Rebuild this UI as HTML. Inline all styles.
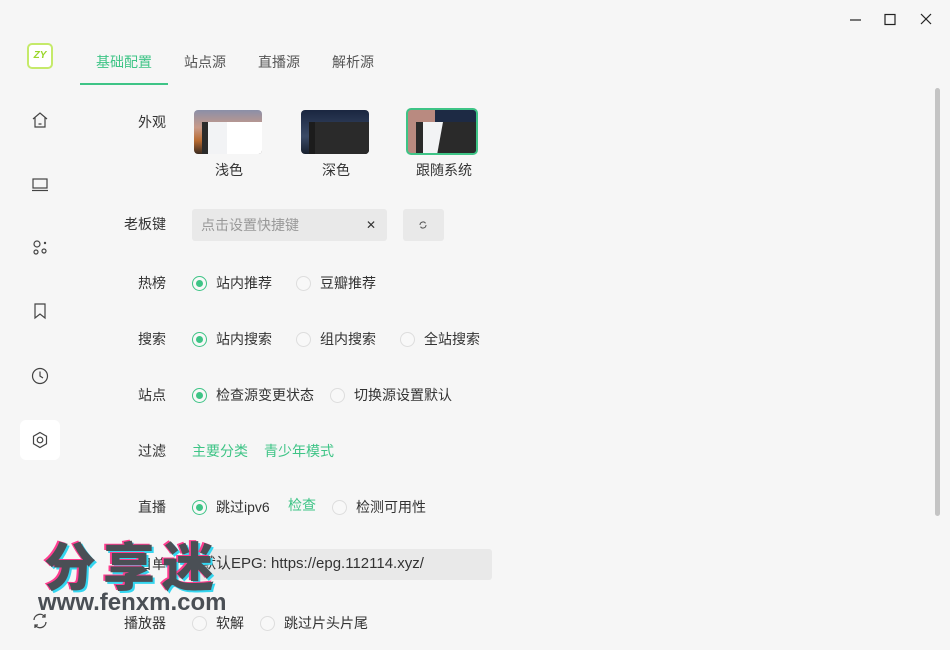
<!DOCTYPE html>
<html><head><meta charset="utf-8"><style>
*{margin:0;padding:0;box-sizing:border-box}
body{width:950px;height:650px;background:#f6f6f6;font-family:"Liberation Sans","Noto Sans CJK SC",sans-serif;font-size:14px;line-height:16px;color:#333;position:relative;overflow:hidden}
.a{position:absolute;white-space:nowrap}
.lbl{position:absolute;right:784px;line-height:16px}
.r{position:absolute;width:15px;height:15px;border-radius:50%;border:1px solid #ddd;background:#f8f8f8}
.r.on{border-color:#3ec486}
.r.on::after{content:"";position:absolute;left:3px;top:3px;width:7px;height:7px;border-radius:50%;background:#3ec486}
.g{color:#3ec486}
.ic{position:absolute;left:30px;width:20px;height:20px}
</style></head><body>
<svg class="a" style="left:845px;top:10px" width="95" height="20"><g stroke="#222" stroke-width="1.2" fill="none"><line x1="5" y1="10" x2="16" y2="10"/><rect x="40" y="4.5" width="10" height="10"/><line x1="76" y1="4" x2="86" y2="14"/><line x1="86" y1="4" x2="76" y2="14"/></g></svg>
<div class="a" style="left:27px;top:43px;width:26px;height:26px;border-radius:5px;border:2px solid #c5ea6a;background:#fff;font:bold italic 10px 'Liberation Sans';color:#9ad62a;text-align:center;line-height:22px">ZY</div>
<div class="a g" style="left:96px;top:54px">基础配置</div>
<div class="a" style="left:184px;top:54px;color:#555">站点源</div>
<div class="a" style="left:258px;top:54px;color:#555">直播源</div>
<div class="a" style="left:332px;top:54px;color:#555">解析源</div>
<div class="a" style="left:80px;top:83px;width:88px;height:2px;background:#3ec486"></div>
<svg class="ic" style="top:110px" viewBox="0 0 20 20" fill="none" stroke="#444" stroke-width="1.2"><path d="M3 9L10 3l7 6M5 7.5V17h10V7.5M8.5 14h3"/></svg>
<svg class="ic" style="top:174px" viewBox="0 0 20 20" fill="none" stroke="#444" stroke-width="1.2"><rect x="3" y="5" width="14" height="9"/><path d="M2 16.5h16"/></svg>
<svg class="ic" style="top:237px" viewBox="0 0 20 20" fill="none" stroke="#444" stroke-width="1.2"><circle cx="7" cy="7" r="3"/><circle cx="6" cy="15" r="2"/><circle cx="14" cy="14" r="2"/><circle cx="15" cy="6" r=".6"/></svg>
<svg class="ic" style="top:301px" viewBox="0 0 20 20" fill="none" stroke="#444" stroke-width="1.2"><path d="M5 3h10v14l-5-4-5 4z"/></svg>
<svg class="ic" style="top:366px" viewBox="0 0 20 20" fill="none" stroke="#444" stroke-width="1.2"><circle cx="10" cy="10" r="7.5"/><path d="M10 5.5V10l3 2"/></svg>
<div class="a" style="left:20px;top:420px;width:40px;height:40px;background:#fff;border-radius:6px"></div>
<svg class="ic" style="top:430px" viewBox="0 0 20 20" fill="none" stroke="#444" stroke-width="1.2"><path d="M10 2.5l6.5 3.75v7.5L10 17.5l-6.5-3.75v-7.5z"/><circle cx="10" cy="10" r="2.8"/></svg>
<svg class="ic" style="top:611px" viewBox="0 0 20 20" fill="none" stroke="#444" stroke-width="1.3"><path d="M4 9a6 6 0 0 1 11-3M16 11a6 6 0 0 1-11 3M15 3v3h-3M5 17v-3h3"/></svg>
<div class="lbl" style="top:114px">外观</div>
<div class="lbl" style="top:216px">老板键</div>
<div class="lbl" style="top:275px">热榜</div>
<div class="lbl" style="top:331px">搜索</div>
<div class="lbl" style="top:387px">站点</div>
<div class="lbl" style="top:443px">过滤</div>
<div class="lbl" style="top:499px">直播</div>
<div class="lbl" style="top:556px">节目单</div>
<div class="lbl" style="top:615px">播放器</div>
<div class="a" style="left:194px;top:110px;width:68px;height:44px;border-radius:4px;overflow:hidden;background:linear-gradient(180deg,#8b8fa8,#c99a88 40%,#b76a30 70%,#3a2a20)">
 <div class="a" style="left:8px;top:12px;width:60px;height:32px;background:#2b2b2b"></div>
 <div class="a" style="left:14px;top:12px;width:54px;height:32px;background:#f2f3f5"></div>
 <div class="a" style="left:33px;top:12px;width:35px;height:32px;background:#fff"></div></div>
<div class="a" style="left:301px;top:110px;width:68px;height:44px;border-radius:4px;overflow:hidden;background:linear-gradient(180deg,#1a2640,#3a4a66 60%,#18202e)">
 <div class="a" style="left:8px;top:12px;width:60px;height:32px;background:#1c1c1c"></div>
 <div class="a" style="left:14px;top:12px;width:54px;height:32px;background:#2a2a2a"></div></div>
<div class="a" style="left:406px;top:108px;width:72px;height:47px;border-radius:5px;border:2px solid #3ec486;overflow:hidden;background:linear-gradient(90deg,#b98a80 40%,#1d2a44 40%)">
 <div class="a" style="left:8px;top:12px;width:62px;height:33px;background:#2a2a2a"></div>
 <div class="a" style="left:15px;top:12px;width:20px;height:33px;background:#f2f3f5;clip-path:polygon(0 0,100% 0,70% 100%,0 100%)"></div></div>
<div class="a" style="left:215px;top:162px">浅色</div>
<div class="a" style="left:322px;top:162px">深色</div>
<div class="a" style="left:416px;top:162px">跟随系统</div>
<div class="a" style="left:192px;top:209px;width:195px;height:32px;background:#e9e9e9;border-radius:3px"></div>
<div class="a" style="left:201px;top:217px;color:#999">点击设置快捷键</div>
<div class="a" style="left:366px;top:217px;font-size:12px">✕</div>
<div class="a" style="left:403px;top:209px;width:41px;height:32px;background:#e9e9e9;border-radius:3px"></div>
<svg class="a" style="left:418px;top:220px" width="10" height="10" viewBox="0 0 10 10" fill="none" stroke="#555" stroke-width="1"><path d="M2 5a3 3 0 0 1 5.5-1.7M8 5a3 3 0 0 1-5.5 1.7"/></svg>
<div class="r on" style="left:192px;top:276px"></div><div class="a" style="left:216px;top:275px">站内推荐</div>
<div class="r" style="left:296px;top:276px"></div><div class="a" style="left:320px;top:275px">豆瓣推荐</div>
<div class="r on" style="left:192px;top:332px"></div><div class="a" style="left:216px;top:331px">站内搜索</div>
<div class="r" style="left:296px;top:332px"></div><div class="a" style="left:320px;top:331px">组内搜索</div>
<div class="r" style="left:400px;top:332px"></div><div class="a" style="left:424px;top:331px">全站搜索</div>
<div class="r on" style="left:192px;top:388px"></div><div class="a" style="left:216px;top:387px">检查源变更状态</div>
<div class="r" style="left:330px;top:388px"></div><div class="a" style="left:354px;top:387px">切换源设置默认</div>
<div class="a g" style="left:192px;top:443px">主要分类</div><div class="a g" style="left:264px;top:443px">青少年模式</div>
<div class="r on" style="left:192px;top:500px"></div><div class="a" style="left:216px;top:499px">跳过ipv6</div>
<div class="a g" style="left:288px;top:497px">检查</div>
<div class="r" style="left:332px;top:500px"></div><div class="a" style="left:356px;top:499px">检测可用性</div>
<div class="a" style="left:192px;top:549px;width:300px;height:31px;background:#e9e9e9;border-radius:3px"></div>
<div class="a" style="left:201px;top:556px;font-size:15px">默认EPG:  https://epg.112114.xyz/</div>
<div class="r" style="left:192px;top:616px"></div><div class="a" style="left:216px;top:615px">软解</div>
<div class="r" style="left:260px;top:616px"></div><div class="a" style="left:284px;top:615px">跳过片头片尾</div>
<div class="a" style="left:44px;top:528px;font:900 52px 'Noto Sans CJK SC',sans-serif;color:#4a4f55;letter-spacing:7px;line-height:72px;text-shadow:-2px -1px 0 #ff3d8f,2px 2px 0 #34d6f0">分享迷</div>
<div class="a" style="left:38px;top:590px;font:bold 24px 'Liberation Sans',sans-serif;line-height:26px;color:#4a4f55">www.fenxm.com</div>
<div class="a" style="left:935px;top:88px;width:5px;height:428px;background:#c4c4c4;border-radius:3px"></div>
</body></html>
